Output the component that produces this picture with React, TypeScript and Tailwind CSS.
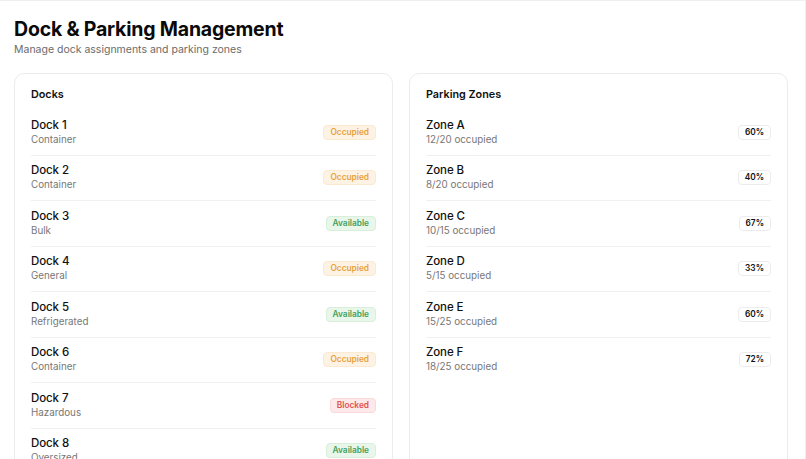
const docks = [
  { name: 'Dock 1', type: 'Container', status: 'Occupied' },
  { name: 'Dock 2', type: 'Container', status: 'Occupied' },
  { name: 'Dock 3', type: 'Bulk', status: 'Available' },
  { name: 'Dock 4', type: 'General', status: 'Occupied' },
  { name: 'Dock 5', type: 'Refrigerated', status: 'Available' },
  { name: 'Dock 6', type: 'Container', status: 'Occupied' },
  { name: 'Dock 7', type: 'Hazardous', status: 'Blocked' },
  { name: 'Dock 8', type: 'Oversized', status: 'Available' },
]

const zones = [
  { name: 'Zone A', used: 12, total: 20 },
  { name: 'Zone B', used: 8, total: 20 },
  { name: 'Zone C', used: 10, total: 15 },
  { name: 'Zone D', used: 5, total: 15 },
  { name: 'Zone E', used: 15, total: 25 },
  { name: 'Zone F', used: 18, total: 25 },
]

const statusStyles: Record<string, string> = {
  Occupied: 'bg-[#fdf3e4] text-[#e9a23b] border-[#fbead0]',
  Available: 'bg-[#e9f6ea] text-[#46a05a] border-[#d9efdc]',
  Blocked: 'bg-[#fde9e9] text-[#e05252] border-[#f9d9d9]',
}

function Row({ title, sub, badge }: { title: string; sub: string; badge: React.ReactNode }) {
  return (
    <div className="flex items-center justify-between border-b border-[#f0f0f0] py-[7.75px] last:border-b-0">
      <div className="flex flex-col">
        <span className="text-[11.5px] font-medium leading-[15px] tracking-[-0.1px] text-[#111]">{title}</span>
        <span className="text-[9.8px] leading-[14px] text-[#777]">{sub}</span>
      </div>
      {badge}
    </div>
  )
}

export default function App() {
  return (
    <div
      className="h-[459px] overflow-hidden border-t border-r border-[#efefef] bg-white px-[14px]"
      style={{ fontFamily: 'Inter, "Noto Sans", sans-serif' }}
    >
      <h1 className="mt-[16px] text-[19.5px] font-bold leading-[24px] tracking-[-0.2px] text-[#0a0a0a]">
        Dock &amp; Parking Management
      </h1>
      <p className="mt-[2px] text-[10.5px] leading-[14px] text-[#6b6b6b]">Manage dock assignments and parking zones</p>

      <div className="mt-[16px] grid grid-cols-2 gap-[16px] pr-[3px]">
        <section className="rounded-[10px] border border-[#ececec] px-[16px] pt-[14px]">
          <h2 className="mb-[8px] text-[10.8px] font-semibold leading-[14px] text-[#111]">Docks</h2>
          {docks.map((d) => (
            <Row
              key={d.name}
              title={d.name}
              sub={d.type}
              badge={
                <span
                  className={`rounded-[4px] border px-[6px] text-[8.3px] font-semibold leading-[13px] ${statusStyles[d.status]}`}
                >
                  {d.status}
                </span>
              }
            />
          ))}
        </section>

        <section className="rounded-[10px] border border-[#ececec] px-[16px] pt-[14px]">
          <h2 className="mb-[8px] text-[10.8px] font-semibold leading-[14px] text-[#111]">Parking Zones</h2>
          {zones.map((z) => (
            <Row
              key={z.name}
              title={z.name}
              sub={`${z.used}/${z.total} occupied`}
              badge={
                <span className="rounded-[4px] border border-[#ececec] bg-white px-[6px] text-[8.3px] font-semibold leading-[13px] text-[#111]">
                  {Math.round((z.used / z.total) * 100)}%
                </span>
              }
            />
          ))}
        </section>
      </div>
    </div>
  )
}
